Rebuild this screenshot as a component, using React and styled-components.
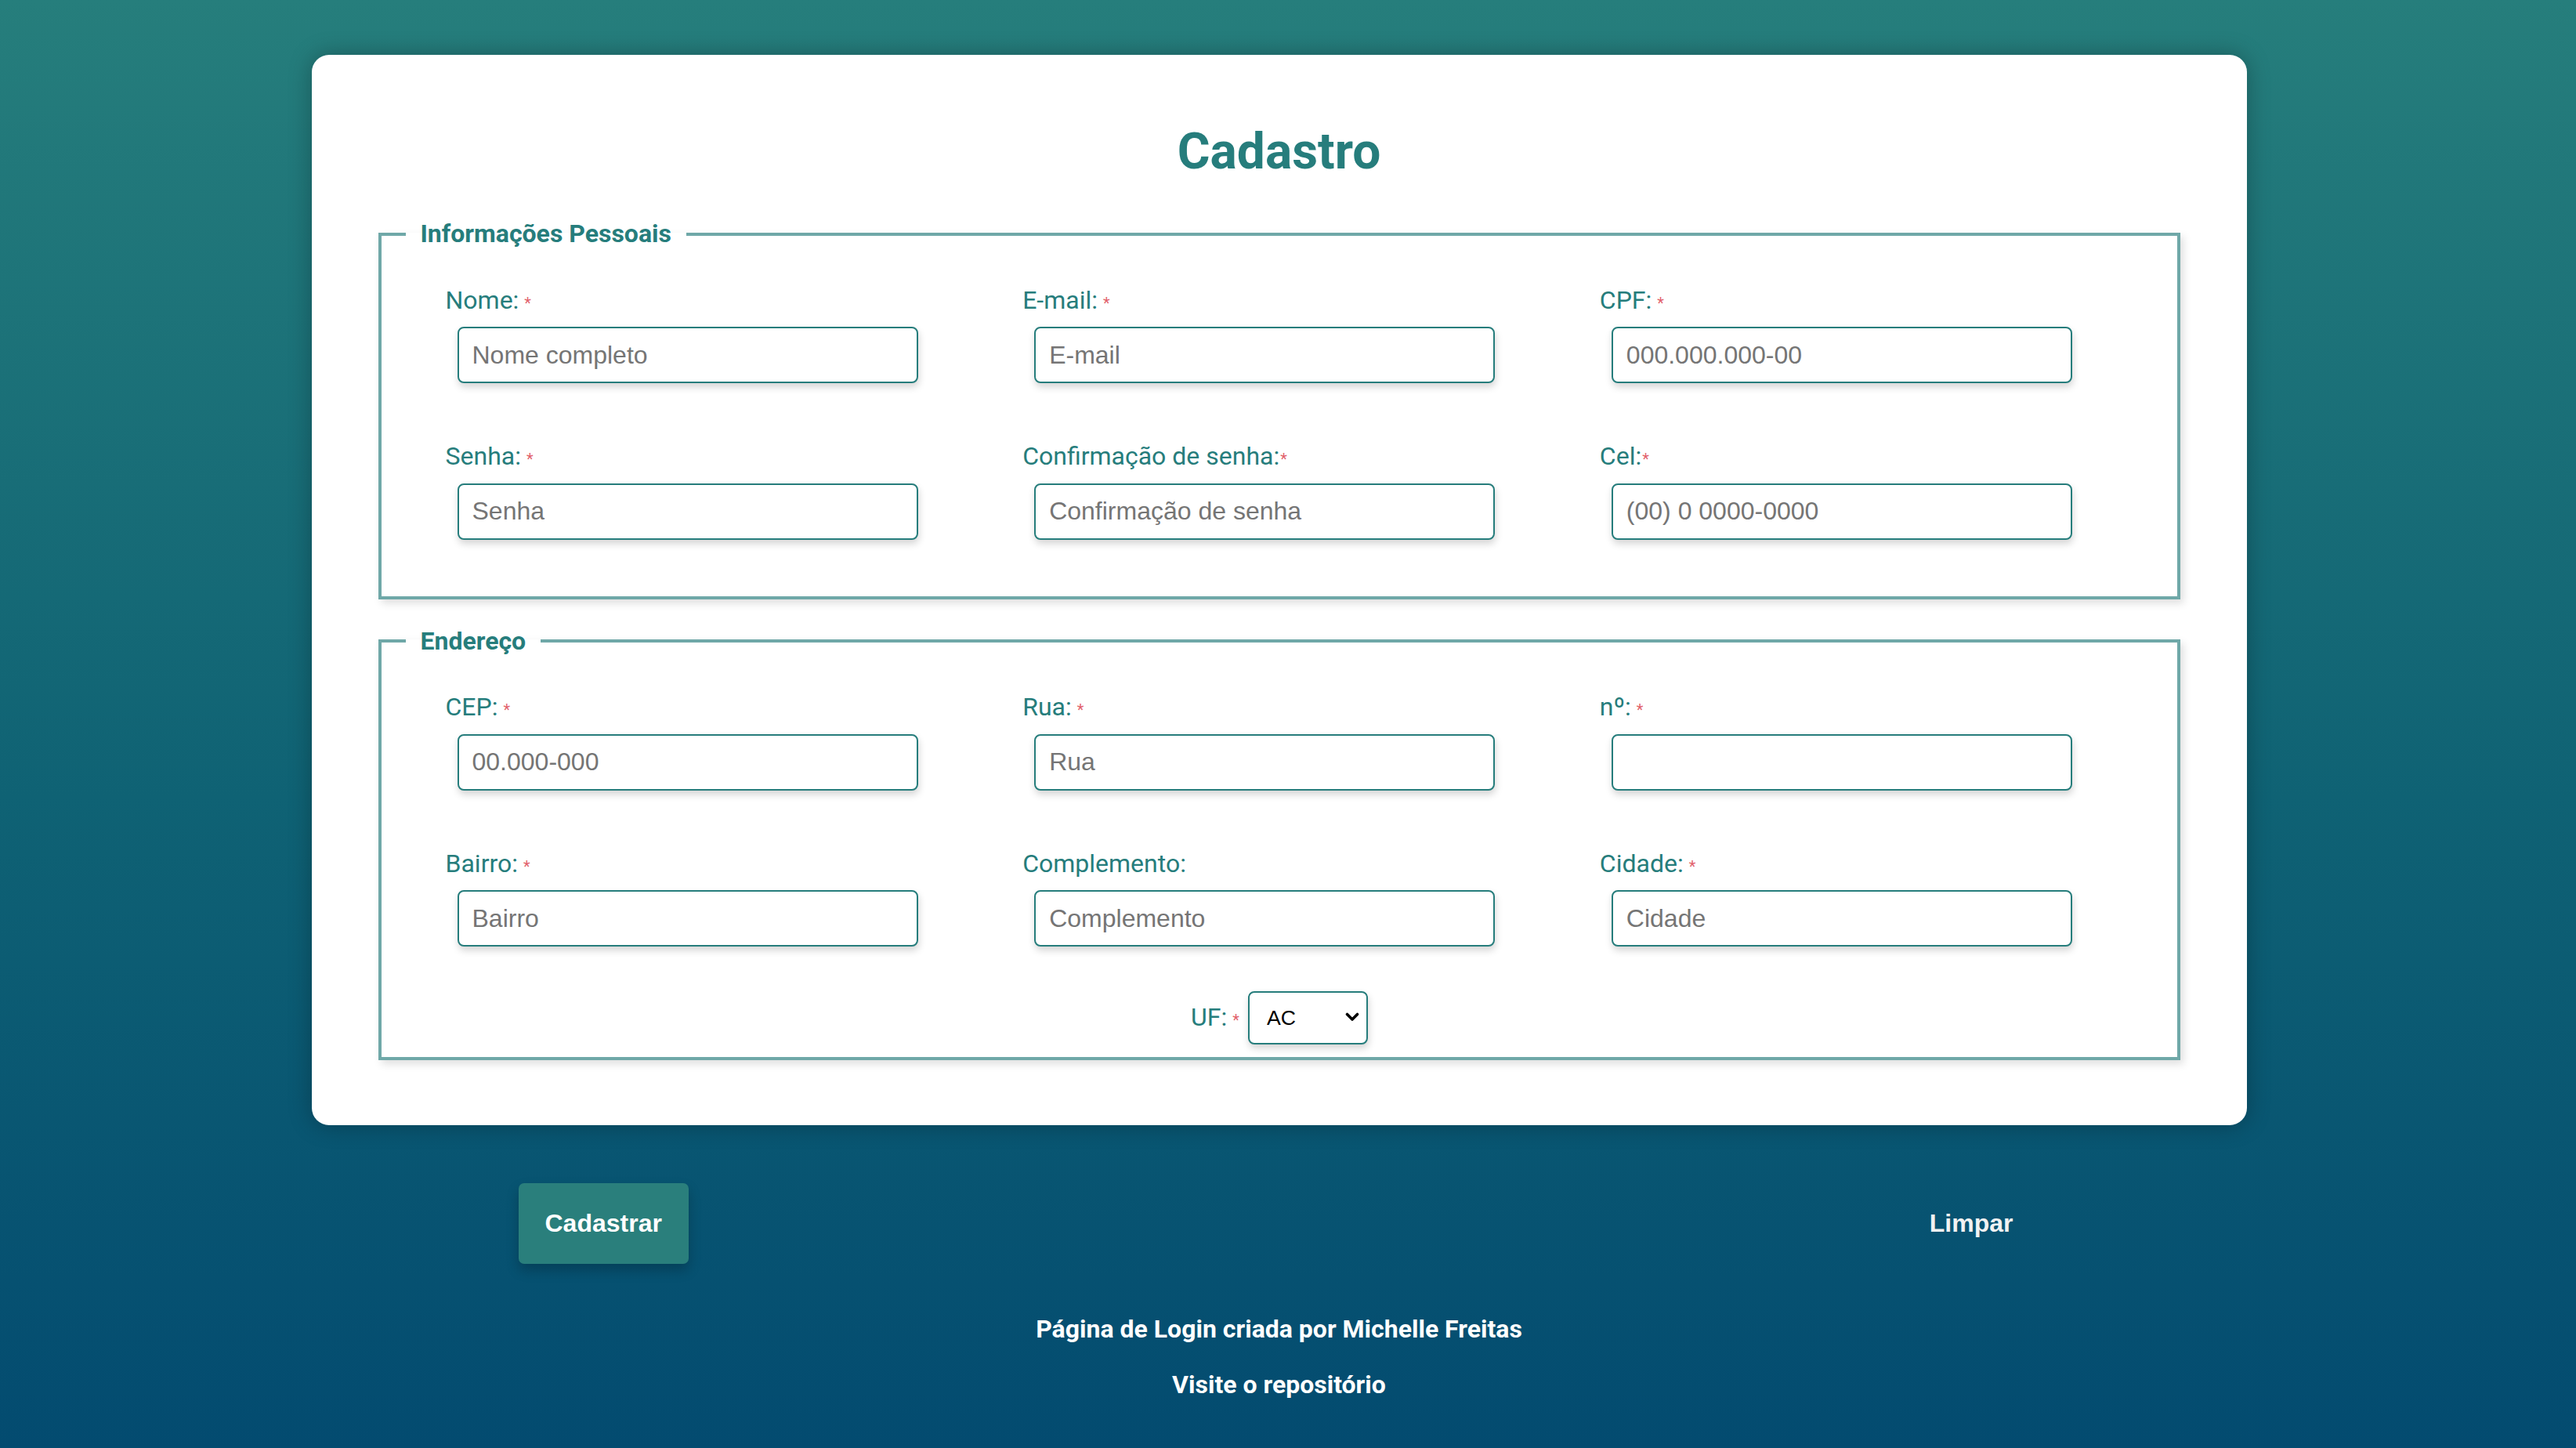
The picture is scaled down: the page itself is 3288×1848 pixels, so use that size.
import React from "react";
import styled, { createGlobalStyle } from "styled-components";

const GlobalStyle = createGlobalStyle`
  html, body {
    margin: 0;
    padding: 0;
  }
  body {
    font-family: Roboto, "Liberation Sans", Arial, sans-serif;
    background: #034b6f;
  }
  * { box-sizing: border-box; }
`;

const TEAL = "#267d7c";

const Page = styled.div`
  min-height: 100vh;
  background: linear-gradient(to bottom, #267e7c 0%, #0f6274 55%, #034b70 100%);
  padding: 70px 23px 60px 0;
`;

const Card = styled.form`
  width: 2470px;
  margin: 0 auto;
  background: #ffffff;
  border-radius: 22px;
  padding: 86px 85px 83px 85px;
  box-shadow: 0 0 30px rgba(0, 0, 0, 0.28);
`;

const Title = styled.h1`
  margin: 0 0 49px 0;
  text-align: center;
  font-family: Roboto, sans-serif;
  font-weight: 700;
  font-size: 64px;
  line-height: 75px;
  color: ${TEAL};
`;

const Section = styled.fieldset`
  margin: ${(p) => (p.$first ? "0" : "35px 0 0 0")};
  min-width: 0;
  border: 4px solid #6fa8a8;
  padding: 47px 0 ${(p) => p.$bottom}px 31px;
  box-shadow: 4px 5px 10px rgba(0, 0, 0, 0.13);
`;

const Legend = styled.legend`
  padding: 0 19px;
  font-family: Roboto, sans-serif;
  font-weight: 700;
  font-size: 32px;
  line-height: 37.5px;
  color: ${TEAL};
`;

const FieldGrid = styled.div`
  display: grid;
  grid-template-columns: repeat(3, 1fr);
  row-gap: 75px;
  padding-left: 51px;
`;

const Field = styled.div`
  display: flex;
  flex-direction: column;
  align-items: flex-start;
`;

const Label = styled.label`
  display: block;
  height: 37.5px;
  font-family: Roboto, sans-serif;
  font-size: 32px;
  line-height: 37.5px;
  color: ${TEAL};
  white-space: nowrap;
`;

const Required = styled.span`
  color: #e2626c;
  font-size: 20px;
  line-height: 0;
  margin-left: ${(p) => (p.$tight ? "1px" : "7px")};
`;

const TextInput = styled.input`
  margin: 15px 0 0 15px;
  width: 588px;
  height: 72px;
  padding: 0 17px;
  border: 2px solid ${TEAL};
  border-radius: 8px;
  background: #ffffff;
  font-family: "Liberation Sans", Arial, sans-serif;
  font-size: 32px;
  color: #222;
  box-shadow: 1px 5px 10px rgba(0, 0, 0, 0.17);
  outline: none;
  &::placeholder {
    color: #757575;
    opacity: 1;
  }
`;

const UfRow = styled.div`
  display: flex;
  justify-content: center;
  align-items: center;
  margin-top: 57px;
  padding-right: 30px;
`;

const SelectWrap = styled.div`
  position: relative;
  margin-left: 11px;
`;

const Select = styled.select`
  appearance: none;
  -webkit-appearance: none;
  display: block;
  width: 153px;
  height: 68px;
  padding: 0 0 0 22px;
  border: 2px solid ${TEAL};
  border-radius: 8px;
  background: #ffffff;
  font-family: "Liberation Sans", Arial, sans-serif;
  font-size: 26.67px;
  color: #000;
  box-shadow: 1px 5px 10px rgba(0, 0, 0, 0.17);
  outline: none;
`;

const Chevron = styled.svg`
  position: absolute;
  right: 11px;
  top: 27px;
  width: 18px;
  height: 12px;
  pointer-events: none;
`;

const Actions = styled.div`
  width: 2470px;
  margin: 74px auto 0 auto;
  padding: 0 264px;
  display: flex;
  justify-content: space-between;
  align-items: center;
`;

const Button = styled.button`
  padding: 33px 34px;
  border: none;
  border-radius: 7px;
  font-family: "Liberation Sans", Arial, sans-serif;
  font-weight: 700;
  font-size: 32px;
  line-height: 37px;
  color: ${(p) => (p.$primary ? "#ffffff" : "#f2f2f2")};
  background: ${(p) => (p.$primary ? "#2a7f7c" : "transparent")};
  box-shadow: ${(p) => (p.$primary ? "0 8px 16px rgba(0, 0, 0, 0.22)" : "none")};
  cursor: pointer;
`;

const Footer = styled.footer`
  margin-top: 65px;
  display: flex;
  flex-direction: column;
  align-items: center;
  gap: 33.5px;
`;

const FooterText = styled.p`
  margin: 0;
  font-family: Roboto, sans-serif;
  font-weight: 700;
  font-size: 32px;
  line-height: 37.5px;
  color: #ffffff;
`;

const FooterLink = styled.a`
  font-family: Roboto, sans-serif;
  font-weight: 700;
  font-size: 32px;
  line-height: 37.5px;
  color: #ffffff;
  text-decoration: none;
`;

const personal = [
  { id: "nome", label: "Nome:", ph: "Nome completo", req: true },
  { id: "email", label: "E-mail:", ph: "E-mail", req: true },
  { id: "cpf", label: "CPF:", ph: "000.000.000-00", req: true },
  { id: "senha", label: "Senha:", ph: "Senha", req: true },
  { id: "conf", label: "Confirmação de senha:", ph: "Confirmação de senha", req: true, tight: true },
  { id: "cel", label: "Cel:", ph: "(00) 0 0000-0000", req: true, tight: true },
];

const address = [
  { id: "cep", label: "CEP:", ph: "00.000-000", req: true },
  { id: "rua", label: "Rua:", ph: "Rua", req: true },
  { id: "num", label: "nº:", ph: "", req: true },
  { id: "bairro", label: "Bairro:", ph: "Bairro", req: true },
  { id: "comp", label: "Complemento:", ph: "Complemento", req: false },
  { id: "cidade", label: "Cidade:", ph: "Cidade", req: true },
];

function FieldItem({ f }) {
  return (
    <Field>
      <Label htmlFor={f.id}>
        {f.label}
        {f.req && <Required $tight={f.tight}>*</Required>}
      </Label>
      <TextInput id={f.id} placeholder={f.ph} />
    </Field>
  );
}

export default function App() {
  return (
    <>
      <GlobalStyle />
      <Page>
        <Card onSubmit={(e) => e.preventDefault()}>
          <Title>Cadastro</Title>
          <Section $first $bottom={72}>
            <Legend>Informações Pessoais</Legend>
            <FieldGrid>
              {personal.map((f) => (
                <FieldItem key={f.id} f={f} />
              ))}
            </FieldGrid>
          </Section>
          <Section $bottom={16}>
            <Legend>Endereço</Legend>
            <FieldGrid>
              {address.map((f) => (
                <FieldItem key={f.id} f={f} />
              ))}
            </FieldGrid>
            <UfRow>
              <Label htmlFor="uf">
                UF:<Required>*</Required>
              </Label>
              <SelectWrap>
                <Select id="uf" defaultValue="AC">
                  <option value="AC">AC</option>
                  <option value="AL">AL</option>
                  <option value="AM">AM</option>
                  <option value="BA">BA</option>
                  <option value="SP">SP</option>
                </Select>
                <Chevron viewBox="0 0 18 12">
                  <path d="M2.5 2.5 L9 9 L15.5 2.5" fill="none" stroke="#000" strokeWidth="3.6" strokeLinecap="round" strokeLinejoin="round" />
                </Chevron>
              </SelectWrap>
            </UfRow>
          </Section>
        </Card>
        <Actions>
          <Button $primary type="button">Cadastrar</Button>
          <Button type="button">Limpar</Button>
        </Actions>
        <Footer>
          <FooterText>Página de Login criada por Michelle Freitas</FooterText>
          <FooterLink href="#">Visite o repositório</FooterLink>
        </Footer>
      </Page>
    </>
  );
}
